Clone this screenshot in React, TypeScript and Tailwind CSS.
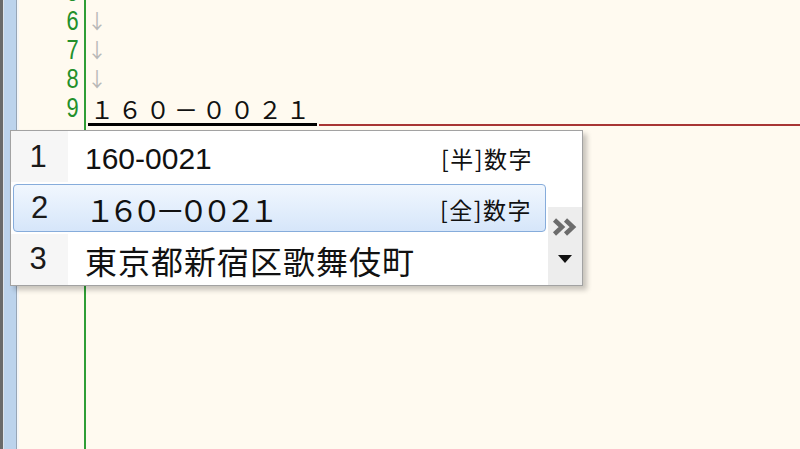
import React from "react";

const jp = { fontFamily: '"Noto Sans CJK JP", "Noto Sans", sans-serif' };
const lat = { fontFamily: '"Liberation Sans", Arial, sans-serif' };

function DoubleChevron() {
  return (
    <svg width="26" height="18" viewBox="0 0 26 18">
      <path d="M2.5 2 L10 9 L2.5 16" fill="none" stroke="#6c6c6c" strokeWidth="4.5" strokeLinejoin="miter" />
      <path d="M13.5 2 L21 9 L13.5 16" fill="none" stroke="#6c6c6c" strokeWidth="4.5" strokeLinejoin="miter" />
    </svg>
  );
}

function DownTri() {
  return (
    <svg width="14" height="8" viewBox="0 0 14 8">
      <path d="M0 0 L14 0 L7 8 Z" fill="#111" />
    </svg>
  );
}

function LineNo({ n }: { n: string }) {
  return (
    <div className="h-[29px] flex items-center justify-end pr-[5px] leading-none">
      <span className="inline-block text-[28px] text-[#23902a] scale-x-[0.78] origin-right" style={lat}>
        {n}
      </span>
    </div>
  );
}

export default function App() {
  const lines = ["5", "6", "7", "8", "9"];
  return (
    <div className="w-[800px] h-[449px] relative overflow-hidden flex bg-[#fffaf0]">
      {/* left window strip */}
      <div className="flex h-full shrink-0">
        <div className="w-[3px] bg-[#6a6a6a]" />
        <div className="w-[1px] bg-[#dde3ea]" />
        <div className="w-[12px] bg-[#bcd3ec]" />
        <div className="w-[1px] bg-[#98a6b6]" />
        <div className="w-[2px] bg-[#f4f6f8]" />
      </div>

      {/* gutter with line numbers */}
      <div className="w-[65px] shrink-0 flex flex-col mt-[-23px]">
        {lines.map((n) => (
          <LineNo key={n} n={n} />
        ))}
      </div>

      {/* green separator */}
      <div className="w-[2px] h-full bg-[#2f9e36] shrink-0" />

      {/* text area */}
      <div className="flex-1 flex flex-col mt-[-23px]">
        <div className="h-[29px]" />
        {[6, 7, 8].map((n) => (
          <div key={n} className="h-[29px] pl-[1px] text-[20px] leading-[29px] text-[#b8b8b8]" style={jp}>
            ↓
          </div>
        ))}
        <div className="h-[33px] flex items-end">
          <span
            className="ml-[2px] pl-[2px] pr-[3px] text-[24px] leading-[28px] tracking-[4px] text-[#111] border-b-[3px] border-black"
            style={jp}
          >
            １６０－００２１
          </span>
          <div className="flex-1 h-[2px] bg-[#a83535] ml-[2px]" />
        </div>
      </div>

      {/* candidate popup */}
      <div className="absolute left-[10px] top-[130px] w-[573px] h-[156px] bg-white border border-[#a2a2a2] shadow-[4px_4px_5px_rgba(0,0,0,0.22)] flex">
        <div className="flex-1 flex flex-col">
          {/* row 1 */}
          <div className="h-[51px] flex items-stretch">
            <div className="w-[57px] bg-[#f6f6f6] flex items-center justify-center pt-[2px] pr-[3px] text-[31px] text-[#1a1a1a]" style={lat}>
              1
            </div>
            <div className="flex-1 flex items-center justify-between pl-[17px] pr-[15px] pt-[4px]">
              <span className="text-[30px] text-[#111]" style={lat}>160-0021</span>
              <span className="text-[23px] tracking-[1.5px] text-[#111]" style={jp}>[半]数字</span>
            </div>
          </div>
          {/* row 2 highlighted */}
          <div className="h-[52px] flex items-stretch py-[2px] pl-[2px] pr-[2px]">
            <div className="flex-1 flex items-stretch rounded-[4px] border border-[#86acdb] bg-gradient-to-b from-[#f1f7fe] to-[#d6e6fa]">
              <div className="w-[54px] flex items-center justify-center pr-[3px] text-[31px] text-[#1a1a1a]" style={lat}>
                2
              </div>
              <div className="flex-1 flex items-center justify-between pl-[17px] pr-[13px] pt-[2px]">
                <span className="text-[30px] tracking-[-6.6px] text-[#111]" style={jp}>１６０－００２１</span>
                <span className="text-[23px] tracking-[1.5px] text-[#111]" style={jp}>[全]数字</span>
              </div>
            </div>
          </div>
          {/* row 3 */}
          <div className="h-[51px] flex items-stretch">
            <div className="w-[57px] bg-[#f6f6f6] flex items-center justify-center pr-[3px] text-[31px] text-[#1a1a1a]" style={lat}>
              3
            </div>
            <div className="flex-1 flex items-center pl-[17px] pr-[16px]">
              <span className="text-[32px] tracking-[1px] text-[#111] leading-none" style={jp}>東京都新宿区歌舞伎町</span>
            </div>
          </div>
        </div>
        {/* scroll column */}
        <div className="w-[34px] flex flex-col">
          <div className="h-[76px]" />
          <div className="flex-1 bg-[#ededed] flex flex-col items-center pt-[11px] gap-[19px]">
            <DoubleChevron />
            <DownTri />
          </div>
        </div>
      </div>
    </div>
  );
}
